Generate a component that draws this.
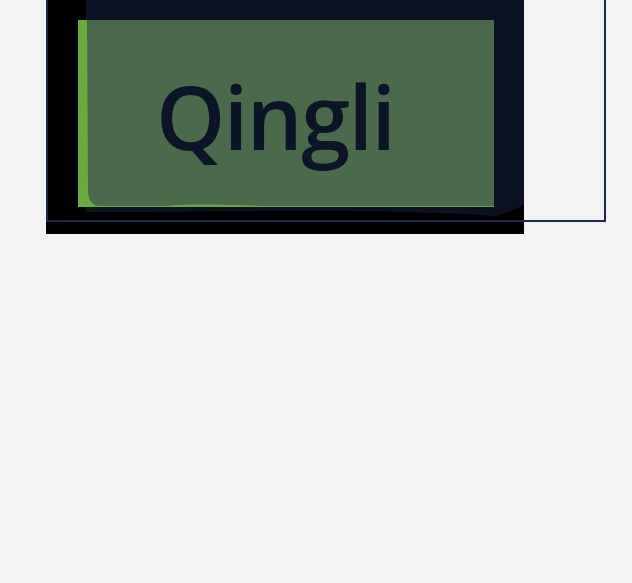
import React from 'react';

const Logo = () => (
    <svg width="478" height="234" viewBox="0 0 478 234" className="block">
        <rect x="0" y="0" width="478" height="234" fill="#000000" />
        {/* navy plate with soft wavy bottom */}
        <path
            d="M40 0 H478 V204 C474 208 462 212 450 216 C400 212 300 210 200 211 C120 212 70 212 40 212 Z"
            fill="#0b1224"
        />
        <rect x="32" y="20" width="416" height="187" fill="#6bab3c" />
        <path
            d="M41 20 H448 V206 C380 206 280 206 220 206 C180 205 150 203 120 206 H54 C46 206 42 200 42 190 Z"
            fill="#4a6a4b"
        />
        <text
            x="110"
            y="150"
            fill="#0c1428"
            fontSize="88"
            fontWeight="540"
            fontFamily="'Open Sans', 'Noto Sans', sans-serif"
            textLength="240"
        >
            Qingli
        </text>
    </svg>
);

const App = () => {
    return (
        <div className="min-h-screen w-full bg-[#f3f3f3]">
            <div className="ml-[48px] w-[556px] h-[220px] outline-[2px] outline-solid outline-[#1c2a52]">
                <div className="-ml-[2px] w-[478px]">
                    <Logo />
                </div>
            </div>
        </div>
    );
};

export default App;
